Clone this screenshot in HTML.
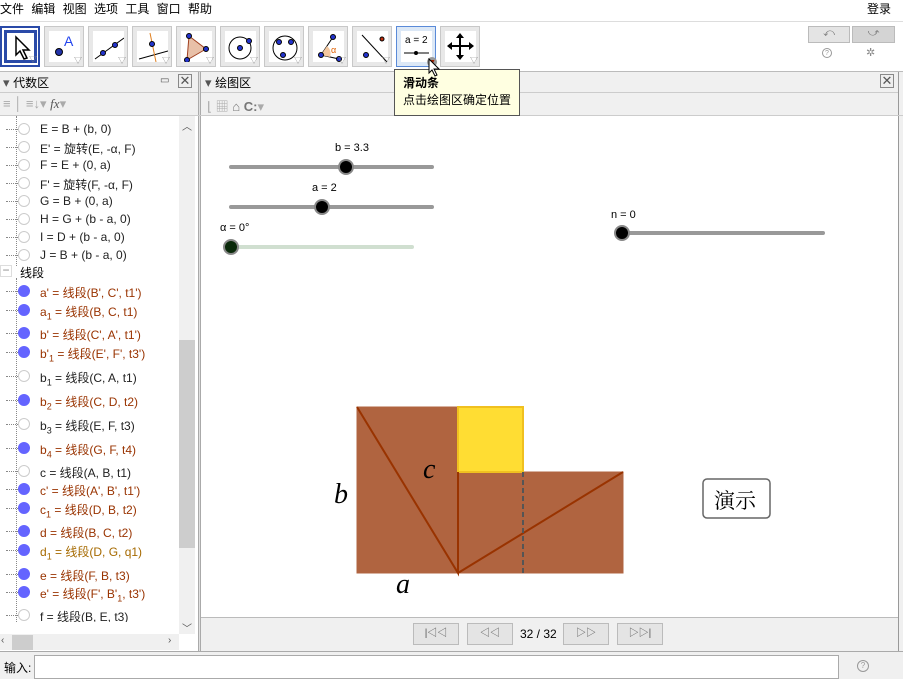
<!DOCTYPE html>
<html><head><meta charset="utf-8"><style>
*{margin:0;padding:0;box-sizing:border-box}
body{width:903px;height:679px;overflow:hidden;background:#fff;font-family:"Liberation Sans","Noto Sans CJK SC",sans-serif;font-size:12px;color:#000;position:relative}
.a{position:absolute}
.tb{position:absolute;top:26px;width:40px;height:41px;border:1px solid #c8c8c8;background:#e8e8e8}
.tb .in{position:absolute;left:4px;top:4px;width:31px;height:31px;background:#fff}
.tri{position:absolute;right:1px;bottom:0px;font-size:8px;color:#888}
.row{position:absolute;left:0;width:178px;height:18px;font-size:12px;white-space:nowrap}
.row .dl{position:absolute;left:6px;top:8px;width:12px;border-top:1px dotted #888}
.row .c{position:absolute;left:18px;top:2px;width:12px;height:12px;border-radius:50%;border:1px solid #ccc;background:#fff}
.row .c.f{background:#6464ff;border-color:#6464ff}
.row .t{position:absolute;left:40px;top:1px}
.br{color:#993300}.gy{color:#222}.or{color:#a66a00}
sub{font-size:9px;line-height:0}
.nb{position:absolute;top:623px;width:46px;height:22px;border:1px solid #bbb;background:#e4e4e4;font-size:10px;color:#555;text-align:center;line-height:20px}
</style></head><body>
<div class="a" style="left:0;top:0;font-size:12px;word-spacing:4px">文件 编辑 视图 选项 工具 窗口 帮助</div>
<div class="a" style="left:867px;top:0">登录</div>
<div class="a" style="left:0;top:21px;width:903px;height:50px;background:#fff;border-top:1px solid #ddd"></div>
<div class="tb" style="left:0;border:2px solid #2a4aa8;background:#fff"><div class="in" style="left:2px;top:2px;border:3px solid #2a4aa8;width:33px;height:33px"></div>
<svg class="a" style="left:11px;top:7px" width="20" height="26"><path d="M3 2 L3 20 L7 16 L11 24 L14 23 L10 15 L16 15 Z" fill="#fff" stroke="#000" stroke-width="1.5"/></svg><span class="tri">▽</span></div>
<div class="tb" style="left:44px"><div class="in"></div><svg class="a" style="left:4px;top:4px" width="31" height="31"><circle cx="10" cy="21" r="3.5" fill="#2233aa" stroke="#000"/><text x="15" y="15" font-size="14" fill="#2244ee" font-family="Liberation Sans">A</text></svg><span class="tri">▽</span></div>
<div class="tb" style="left:88px"><div class="in"></div><svg class="a" style="left:4px;top:4px" width="31" height="31"><line x1="2" y1="28" x2="31" y2="7" stroke="#000"/><circle cx="10" cy="22" r="2.5" fill="#2233cc" stroke="#000"/><circle cx="22" cy="14" r="2.5" fill="#2233cc" stroke="#000"/></svg><span class="tri">▽</span></div>
<div class="tb" style="left:132px"><div class="in"></div><svg class="a" style="left:4px;top:4px" width="31" height="31"><line x1="2" y1="28" x2="31" y2="20" stroke="#000"/><line x1="13" y1="2" x2="19" y2="31" stroke="#e08020"/><circle cx="15" cy="13" r="2.5" fill="#2233cc" stroke="#000"/></svg><span class="tri">▽</span></div>
<div class="tb" style="left:176px"><div class="in"></div><svg class="a" style="left:4px;top:4px" width="31" height="31"><path d="M8 5 L25 18 L6 29 Z" fill="#e8c0a8" stroke="#a04020"/><circle cx="8" cy="5" r="2.5" fill="#2233cc" stroke="#000"/><circle cx="25" cy="18" r="2.5" fill="#2233cc" stroke="#000"/><circle cx="6" cy="29" r="2.5" fill="#2233cc" stroke="#000"/></svg><span class="tri">▽</span></div>
<div class="tb" style="left:220px"><div class="in"></div><svg class="a" style="left:4px;top:4px" width="31" height="31"><circle cx="15" cy="17" r="11" fill="none" stroke="#000"/><circle cx="15" cy="17" r="2.5" fill="#2233cc" stroke="#000"/><circle cx="24" cy="10" r="2.5" fill="#2233cc" stroke="#000"/></svg><span class="tri">▽</span></div>
<div class="tb" style="left:264px"><div class="in"></div><svg class="a" style="left:4px;top:4px" width="31" height="31"><circle cx="16" cy="17" r="12" fill="none" stroke="#000"/><circle cx="10" cy="11" r="2.5" fill="#2233cc" stroke="#000"/><circle cx="22" cy="11" r="2.5" fill="#2233cc" stroke="#000"/><circle cx="14" cy="24" r="2.5" fill="#2233cc" stroke="#000"/></svg><span class="tri">▽</span></div>
<div class="tb" style="left:308px"><div class="in"></div><svg class="a" style="left:4px;top:4px" width="31" height="31"><path d="M8 24 L20 6 M8 24 L26 28" stroke="#000"/><path d="M8 24 L14 15 A10 10 0 0 1 17 26 Z" fill="#f4c8a0"/><text x="18" y="22" font-size="9" fill="#e06000">α</text><circle cx="8" cy="24" r="2.5" fill="#2233cc" stroke="#000"/><circle cx="20" cy="6" r="2.5" fill="#2233cc" stroke="#000"/><circle cx="26" cy="28" r="2.5" fill="#2233cc" stroke="#000"/></svg><span class="tri">▽</span></div>
<div class="tb" style="left:352px"><div class="in"></div><svg class="a" style="left:4px;top:4px" width="31" height="31"><line x1="5" y1="4" x2="30" y2="31" stroke="#000"/><circle cx="25" cy="8" r="2" fill="#c03010" stroke="#000"/><circle cx="9" cy="24" r="2.5" fill="#2233cc" stroke="#000"/></svg><span class="tri">▽</span></div>
<div class="tb" style="left:396px;border-color:#5a8ad8;background:#dce8f6"><div class="in"></div><div class="a" style="left:8px;top:8px;font-size:10px">a = 2</div><svg class="a" style="left:4px;top:4px" width="31" height="31"><line x1="3" y1="22" x2="28" y2="22" stroke="#000"/><circle cx="15" cy="22" r="2" fill="#000"/></svg><div class="a" style="left:30px;top:30px;width:10px;height:10px;border-radius:50%;background:#999"></div><div class="a" style="left:32px;top:32px;font-size:7px;color:#a02000">▼</div></div>
<div class="tb" style="left:440px"><div class="in"></div><svg class="a" style="left:4px;top:4px" width="31" height="31"><path d="M15 4 L15 27 M4 15 L27 15" stroke="#000" stroke-width="2"/><path d="M15 2 L11 7 L19 7Z M15 29 L11 24 L19 24Z M2 15 L7 11 L7 19Z M29 15 L24 11 L24 19Z" fill="#000"/></svg><span class="tri">▽</span></div>
<div class="a" style="left:808px;top:26px;width:42px;height:17px;background:#e4e4e4;border:1px solid #bbb;text-align:center;color:#777;font-size:11px">⤺</div>
<div class="a" style="left:852px;top:26px;width:43px;height:17px;background:#d4d4d4;border:1px solid #bbb;text-align:center;color:#777;font-size:11px">⤻</div>
<div class="a" style="left:822px;top:48px;width:10px;height:10px;border:1px solid #999;border-radius:50%;font-size:7px;color:#999;text-align:center;line-height:9px">?</div>
<div class="a" style="left:866px;top:46px;color:#888;font-size:11px">✲</div>
<div class="a" style="left:0;top:71px;width:903px;height:1px;background:#bbb"></div>
<div class="a" style="left:0;top:72px;width:198px;height:44px;background:#f0f0f0"></div>
<div class="a" style="left:201px;top:72px;width:697px;height:44px;background:#f0f0f0"></div>
<div class="a" style="left:198px;top:72px;width:3px;height:580px;background:#e0e0e0;border-left:1px solid #aaa;border-right:1px solid #aaa"></div>
<div class="a" style="left:898px;top:72px;width:5px;height:580px;background:#f0f0f0;border-left:1px solid #999"></div>
<div class="a" style="left:3px;top:74px;font-size:13px;color:#555">▾ <span style="color:#000;font-size:12px">代数区</span></div>
<div class="a" style="left:160px;top:75px;font-size:10px;color:#555">▭</div>
<div class="a" style="left:178px;top:74px;width:14px;height:14px;border:1px solid #888;background:#eee;font-size:13px;line-height:12px;text-align:center;color:#555">✕</div>
<div class="a" style="left:205px;top:74px;font-size:13px;color:#555">▾ <span style="color:#000;font-size:12px">绘图区</span></div>
<div class="a" style="left:880px;top:74px;width:14px;height:14px;border:1px solid #888;background:#eee;font-size:13px;line-height:12px;text-align:center;color:#555">✕</div>
<div class="a" style="left:0;top:92px;width:198px;height:1px;background:#ccc"></div>
<div class="a" style="left:201px;top:92px;width:697px;height:1px;background:#ccc"></div>
<div class="a" style="left:3px;top:96px;color:#aaa;font-size:13px">≡ │ ≡↓▾ <i style="font-family:'Liberation Serif';color:#555">fx</i>▾</div>
<div class="a" style="left:207px;top:96px;color:#aaa;font-size:13px">⌊ ▦ <span style="color:#777">⌂</span> <b style="color:#777">C:</b>▾</div>
<div class="a" style="left:0;top:115px;width:903px;height:1px;background:#ccc"></div>
<div class="a" style="left:394px;top:69px;width:126px;height:47px;background:#ffffe1;border:1px solid #555;padding:5px 0 0 8px;font-size:12px;line-height:17px"><b>滑动条</b><br>点击绘图区确定位置</div>
<svg class="a" style="left:428px;top:58px" width="14" height="20"><path d="M1 1 L1 15 L4 12 L7 18 L9 17 L6 11 L11 11 Z" fill="#fff" stroke="#000"/></svg>
<div class="a" style="left:0;top:116px;width:198px;height:506px;overflow:hidden">
<div class="a" style="left:16px;top:0;height:150px;border-left:1px dotted #888"></div>
<div class="row" style="top:5px"><div class="dl"></div><div class="c"></div><div class="t gy">E = B + (b, 0)</div></div>
<div class="row" style="top:23px"><div class="dl"></div><div class="c"></div><div class="t gy">E' = 旋转(E, -α, F)</div></div>
<div class="row" style="top:41px"><div class="dl"></div><div class="c"></div><div class="t gy">F = E + (0, a)</div></div>
<div class="row" style="top:59px"><div class="dl"></div><div class="c"></div><div class="t gy">F' = 旋转(F, -α, F)</div></div>
<div class="row" style="top:77px"><div class="dl"></div><div class="c"></div><div class="t gy">G = B + (0, a)</div></div>
<div class="row" style="top:95px"><div class="dl"></div><div class="c"></div><div class="t gy">H = G + (b - a, 0)</div></div>
<div class="row" style="top:113px"><div class="dl"></div><div class="c"></div><div class="t gy">I = D + (b - a, 0)</div></div>
<div class="row" style="top:131px"><div class="dl"></div><div class="c"></div><div class="t gy">J = B + (b - a, 0)</div></div>
<div class="a" style="left:0;top:149px;width:12px;height:12px;border:1px solid #ddd;text-align:center;line-height:9px;color:#888">−</div>
<div class="a" style="left:20px;top:148px">线段</div>
<div class="a" style="left:16px;top:162px;height:360px;border-left:1px dotted #888"></div>
<div class="row" style="top:167px"><div class="dl"></div><div class="c f"></div><div class="t br">a' = 线段(B', C', t1')</div></div>
<div class="row" style="top:186px"><div class="dl"></div><div class="c f"></div><div class="t br">a<sub>1</sub> = 线段(B, C, t1)</div></div>
<div class="row" style="top:209px"><div class="dl"></div><div class="c f"></div><div class="t br">b' = 线段(C', A', t1')</div></div>
<div class="row" style="top:228px"><div class="dl"></div><div class="c f"></div><div class="t br">b'<sub>1</sub> = 线段(E', F', t3')</div></div>
<div class="row" style="top:252px"><div class="dl"></div><div class="c"></div><div class="t gy">b<sub>1</sub> = 线段(C, A, t1)</div></div>
<div class="row" style="top:276px"><div class="dl"></div><div class="c f"></div><div class="t br">b<sub>2</sub> = 线段(C, D, t2)</div></div>
<div class="row" style="top:300px"><div class="dl"></div><div class="c"></div><div class="t gy">b<sub>3</sub> = 线段(E, F, t3)</div></div>
<div class="row" style="top:324px"><div class="dl"></div><div class="c f"></div><div class="t br">b<sub>4</sub> = 线段(G, F, t4)</div></div>
<div class="row" style="top:347px"><div class="dl"></div><div class="c"></div><div class="t gy">c = 线段(A, B, t1)</div></div>
<div class="row" style="top:365px"><div class="dl"></div><div class="c f"></div><div class="t br">c' = 线段(A', B', t1')</div></div>
<div class="row" style="top:384px"><div class="dl"></div><div class="c f"></div><div class="t br">c<sub>1</sub> = 线段(D, B, t2)</div></div>
<div class="row" style="top:407px"><div class="dl"></div><div class="c f"></div><div class="t br">d = 线段(B, C, t2)</div></div>
<div class="row" style="top:426px"><div class="dl"></div><div class="c f"></div><div class="t or">d<sub>1</sub> = 线段(D, G, q1)</div></div>
<div class="row" style="top:450px"><div class="dl"></div><div class="c f"></div><div class="t br">e = 线段(F, B, t3)</div></div>
<div class="row" style="top:468px"><div class="dl"></div><div class="c f"></div><div class="t br">e' = 线段(F', B'<sub>1</sub>, t3')</div></div>
<div class="row" style="top:491px"><div class="dl"></div><div class="c"></div><div class="t gy">f = 线段(B, E, t3)</div></div>
<div class="row" style="top:509px"><div class="dl"></div><div class="c f"></div><div class="t br">f' = 线段(B'<sub>1</sub>, E', t3')</div></div>
</div>
<div class="a" style="left:179px;top:116px;width:16px;height:518px;background:#f0f0f0"></div>
<div class="a" style="left:179px;top:340px;width:16px;height:208px;background:#cdcdcd"></div>
<div class="a" style="left:182px;top:118px;font-size:10px;color:#555">︿</div>
<div class="a" style="left:182px;top:620px;font-size:10px;color:#555">﹀</div>
<div class="a" style="left:0;top:634px;width:179px;height:16px;background:#f0f0f0"></div>
<div class="a" style="left:12px;top:635px;width:21px;height:15px;background:#cdcdcd"></div>
<div class="a" style="left:1px;top:635px;font-size:10px;color:#555">‹</div>
<div class="a" style="left:168px;top:635px;font-size:10px;color:#555">›</div>
<svg class="a" style="left:201px;top:116px" width="697" height="501">
<g font-family="Liberation Sans" font-size="11">
<text x="134" y="35">b = 3.3</text>
<line x1="30" y1="51" x2="231" y2="51" stroke="#999" stroke-width="4" stroke-linecap="round"/>
<circle cx="145" cy="51" r="7" fill="#000" stroke="#888" stroke-width="2"/>
<text x="111" y="75">a = 2</text>
<line x1="30" y1="91" x2="231" y2="91" stroke="#999" stroke-width="4" stroke-linecap="round"/>
<circle cx="121" cy="91" r="7" fill="#000" stroke="#888" stroke-width="2"/>
<text x="19" y="115">α = 0°</text>
<line x1="30" y1="131" x2="211" y2="131" stroke="#d0dfd0" stroke-width="4" stroke-linecap="round"/>
<circle cx="30" cy="131" r="7" fill="#0a2a0a" stroke="#888" stroke-width="2"/>
<text x="410" y="102">n = 0</text>
<line x1="421" y1="117" x2="622" y2="117" stroke="#999" stroke-width="4" stroke-linecap="round"/>
<circle cx="421" cy="117" r="7" fill="#000" stroke="#888" stroke-width="2"/>
</g>
<g transform="translate(-201,-116)">
<rect x="357" y="407" width="101" height="166" fill="#b06440" stroke="#b06440"/>
<rect x="458" y="472" width="165" height="101" fill="#b06440" stroke="#b06440"/>
<rect x="458" y="407" width="65" height="65" fill="#ffdd33" stroke="#f0c020" stroke-width="2"/>
<path d="M357 407 L458 573 L458 472 M458 573 L623 472" stroke="#993300" stroke-width="2" fill="none"/>
<line x1="523" y1="472" x2="523" y2="573" stroke="#555" stroke-width="2" stroke-dasharray="5,3"/>
<g font-family="Liberation Serif" font-style="italic" font-size="28">
<text x="334" y="503">b</text><text x="423" y="478">c</text><text x="396" y="593">a</text></g>
<rect x="703" y="479" width="67" height="39" rx="4" fill="#fff" stroke="#666" stroke-width="1.5"/>
<text x="714" y="508" font-size="21" font-family="Noto Serif CJK SC,serif">演示</text>
</g>
</svg>
<div class="a" style="left:201px;top:617px;width:697px;height:35px;background:#f0f0f0;border-top:1px solid #bbb"></div>
<div class="nb" style="left:413px">|◁◁</div>
<div class="nb" style="left:467px">◁◁</div>
<div class="a" style="left:520px;top:627px;font-size:12px">32 / 32</div>
<div class="nb" style="left:563px">▷▷</div>
<div class="nb" style="left:617px">▷▷|</div>
<div class="a" style="left:0;top:651px;width:903px;height:28px;background:#f0f0f0;border-top:1px solid #aaa"></div>
<div class="a" style="left:4px;top:659px;font-size:12px">输入:</div>
<div class="a" style="left:34px;top:655px;width:805px;height:24px;background:#fff;border:1px solid #aaa"></div>
<div class="a" style="left:857px;top:660px;width:12px;height:12px;border:1px solid #999;border-radius:50%;font-size:8px;color:#999;text-align:center;line-height:10px">?</div>
</body></html>
